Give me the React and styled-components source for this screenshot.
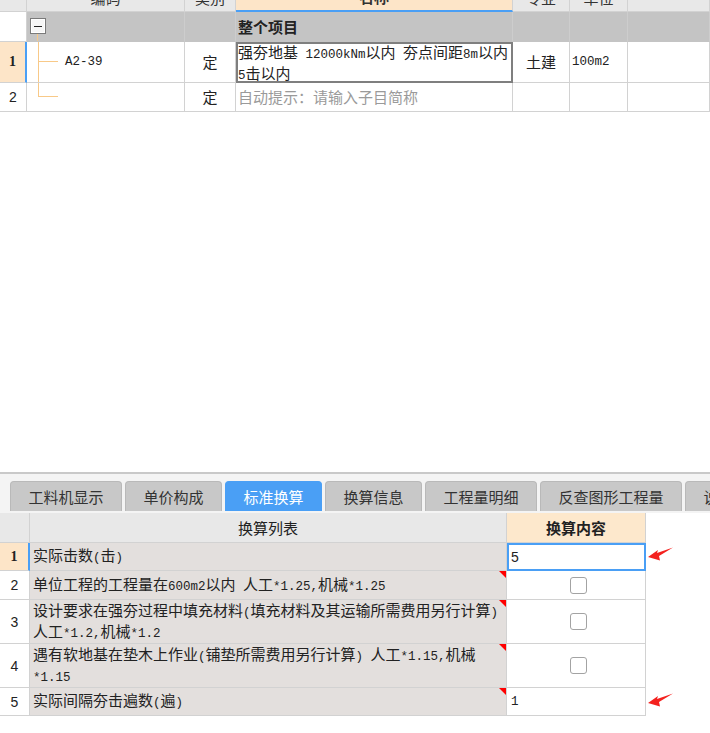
import React from "react";
import styled, { createGlobalStyle, css } from "styled-components";

const GlobalStyle = createGlobalStyle`
  html, body { margin: 0; padding: 0; background: #fff; }
  body { font-family: "Noto Sans CJK SC", "Noto Sans", sans-serif; color: #222; }
  * { box-sizing: border-box; }
`;

const LINE = "#d2d2d2";
const ORANGE = "#fde5c8";
const BLUE = "#4a9ff5";
const TREE = "#f8c988";

const Page = styled.div`
  width: 710px;
  height: 733px;
  display: flex;
  flex-direction: column;
  overflow: hidden;
  background: #fff;
`;

/* ---------- shared text helpers ---------- */
const Lat = styled.span`
  font-family: "Liberation Mono", monospace;
  font-size: 12.5px;
`;

function Mixed({ text }) {
  const parts = text.split(/([\x20-\x7e]+)/);
  return parts.map((p, i) =>
    /^[\x20-\x7e]+$/.test(p) ? <Lat key={i}>{p}</Lat> : <React.Fragment key={i}>{p}</React.Fragment>
  );
}

/* ---------- top grid ---------- */
const TopGrid = styled.div`
  display: grid;
  grid-template-columns: 27px 158px 51px 277px 57px 58px 1fr;
  grid-template-rows: 12px 30px 41px 29px;
`;

const Cell = styled.div`
  display: flex;
  align-items: center;
  justify-content: ${(p) => (p.$center ? "center" : "flex-start")};
  padding: 0 2px;
  border-right: 1px solid ${(p) => (p.$grey ? "#cdcdcd" : LINE)};
  border-bottom: 1px solid ${(p) => (p.$grey ? "#c4c4c4" : LINE)};
  background: ${(p) => (p.$grey ? "#c4c4c4" : "#fff")};
  font-size: 15px;
  line-height: 18px;
  white-space: pre;
  overflow: hidden;
  color: ${(p) => (p.$hint ? "#9a9a9a" : "#222")};
  font-weight: ${(p) => (p.$bold ? 700 : 400)};
  ${(p) =>
    p.$selected &&
    css`
      outline: 2px solid #7f7f7f;
      outline-offset: -2px;
      align-items: flex-start;
      padding-top: 1px;
    `}
`;

const HeadCell = styled.div`
  display: flex;
  align-items: flex-end;
  justify-content: center;
  padding-bottom: 4px;
  overflow: hidden;
  background: ${(p) => (p.$accent ? ORANGE : "#e8e8e8")};
  border-right: 1px solid ${LINE};
  border-bottom: ${(p) => (p.$accent ? `2px solid ${BLUE}` : `1px solid ${LINE}`)};
  font-size: 15px;
  line-height: 18px;
  color: #333;
  font-weight: ${(p) => (p.$accent ? 700 : 400)};
  white-space: nowrap;
`;

const NumCell = styled.div`
  display: flex;
  align-items: center;
  justify-content: center;
  background: ${(p) => (p.$active ? ORANGE : "#fff")};
  border-right: ${(p) => (p.$active ? `2px solid ${BLUE}` : `1px solid ${LINE}`)};
  border-bottom: 1px solid ${LINE};
  font-family: ${(p) => (p.$active ? '"Liberation Serif", serif' : '"Liberation Sans", sans-serif')};
  font-weight: ${(p) => (p.$active ? 700 : 400)};
  font-size: 14px;
  color: #222;
`;

const CodeCell = styled.div`
  display: flex;
  flex-direction: ${(p) => (p.$column ? "column" : "row")};
  align-items: stretch;
  padding: ${(p) => (p.$column ? "6px 0 0 3px" : "0")};
  border-right: 1px solid ${(p) => (p.$grey ? "#cdcdcd" : LINE)};
  border-bottom: 1px solid ${(p) => (p.$grey ? "#c4c4c4" : LINE)};
  background: ${(p) => (p.$grey ? "#c4c4c4" : "#fff")};
`;

const Collapse = styled.div`
  width: 16px;
  height: 16px;
  flex: none;
  border: 1px solid #7a7a7a;
  background: #f6f6f6;
  box-shadow: inset 0 0 0 1px #fff;
  display: flex;
  align-items: center;
  justify-content: center;
  &::before {
    content: "";
    width: 8px;
    height: 1px;
    background: #222;
  }
`;

const Stem = styled.div`
  flex: 1;
  margin-left: 7px;
  border-left: 1px solid ${TREE};
`;

const Connector = styled.div`
  flex: none;
  width: 20px;
  margin-left: 11px;
  border-left: ${(p) => (p.$last ? "none" : `1px solid ${TREE}`)};
`;

const Branch = styled.div`
  height: 50%;
  border-bottom: 1px solid ${TREE};
  border-left: ${(p) => (p.$last ? `1px solid ${TREE}` : "none")};
`;

const Code = styled.span`
  align-self: center;
  margin-left: 7px;
  font-family: "Liberation Mono", monospace;
  font-size: 12.5px;
  color: #222;
`;

/* ---------- bottom panel ---------- */
const Panel = styled.div`
  margin-top: auto;
  height: 261px;
  flex: none;
  display: flex;
  flex-direction: column;
  border-top: 2px solid #c9c9c9;
  background: #fff;
`;

const TabBar = styled.div`
  display: flex;
  gap: 3px;
  padding: 7px 0 2px 10px;
  background: #f4f4f4;
  overflow: hidden;
`;

const Tab = styled.div`
  flex: none;
  height: 30px;
  padding: 0 17.5px;
  border: 1px solid ${(p) => (p.$active ? BLUE : "#b9b9b9")};
  border-bottom: none;
  border-radius: 4px 4px 0 0;
  background: ${(p) => (p.$active ? BLUE : "#c8c8c8")};
  color: ${(p) => (p.$active ? "#fff" : "#333")};
  font-size: 15px;
  line-height: 29px;
  white-space: nowrap;
`;

const BGrid = styled.div`
  display: grid;
  grid-template-columns: 30px 477px 139px 1fr;
  grid-template-rows: 30px 28px 29px 44px 44px 28px;
`;

const BHead = styled.div`
  display: flex;
  align-items: center;
  justify-content: center;
  background: ${(p) => (p.$accent ? "#fde8cc" : "#e8e8e8")};
  border-right: 1px solid ${LINE};
  border-bottom: 1px solid ${LINE};
  font-size: 15px;
  font-weight: ${(p) => (p.$accent ? 700 : 400)};
  color: #222;
`;

const BText = styled.div`
  position: relative;
  display: flex;
  align-items: center;
  padding-left: 3px;
  background: #e3dfdd;
  border-right: 1px solid ${LINE};
  border-bottom: 1px solid ${LINE};
  font-size: 15px;
  line-height: 18px;
  white-space: pre;
  color: #222;
  ${(p) =>
    p.$flag &&
    css`
      &::after {
        content: "";
        position: absolute;
        top: 0;
        right: 0;
        border-style: solid;
        border-width: 0 7px 7px 0;
        border-color: transparent #f00 transparent transparent;
      }
    `}
`;

const BVal = styled.div`
  display: flex;
  align-items: center;
  justify-content: ${(p) => (p.$center ? "center" : "flex-start")};
  padding-left: 4px;
  background: #fff;
  border-right: 1px solid ${LINE};
  border-bottom: 1px solid ${LINE};
  font-family: "Liberation Sans", sans-serif;
  font-size: 14px;
  color: #222;
  ${(p) =>
    p.$selected &&
    css`
      outline: 2px solid ${BLUE};
      outline-offset: -2px;
    `}
`;

const Aside = styled.div`
  display: flex;
  align-items: center;
  padding: 0 0 0 2px;
  margin-top: ${(p) => p.$lift || 0}px;
`;

const Check = styled.span`
  width: 17px;
  height: 17px;
  border: 1px solid #a3a3a3;
  border-radius: 3px;
  background: #fff;
`;

const Arrow = () => (
  <svg width="26" height="14" viewBox="0 0 26 14">
    <polygon points="0,10 10,3 9,6 25,0.5 11,9 12,13.5" fill="#f4211e" />
  </svg>
);

const tabs = ["工料机显示", "单价构成", "标准换算", "换算信息", "工程量明细", "反查图形工程量", "说明信息"];

const rows = [
  { n: "1", text: "实际击数(击)", val: "5", kind: "input", selected: true, arrow: -6 },
  { n: "2", text: "单位工程的工程量在600m2以内 人工*1.25,机械*1.25", kind: "check", flag: true },
  { n: "3", text: "设计要求在强夯过程中填充材料(填充材料及其运输所需费用另行计算)\n人工*1.2,机械*1.2", kind: "check", flag: true },
  { n: "4", text: "遇有软地基在垫木上作业(铺垫所需费用另行计算) 人工*1.15,机械\n*1.15", kind: "check", flag: true },
  { n: "5", text: "实际间隔夯击遍数(遍)", val: "1", kind: "mono", flag: true, arrow: -4 },
];

export default function App() {
  return (
    <Page>
      <GlobalStyle />
      <TopGrid>
        <HeadCell />
        <HeadCell>编码</HeadCell>
        <HeadCell>类别</HeadCell>
        <HeadCell $accent>名称</HeadCell>
        <HeadCell>专业</HeadCell>
        <HeadCell>单位</HeadCell>
        <HeadCell />

        <NumCell />
        <CodeCell $grey $column>
          <Collapse />
          <Stem />
        </CodeCell>
        <Cell $grey />
        <Cell $grey $bold>整个项目</Cell>
        <Cell $grey />
        <Cell $grey />
        <Cell $grey />

        <NumCell $active>1</NumCell>
        <CodeCell>
          <Connector>
            <Branch />
          </Connector>
          <Code>A2-39</Code>
        </CodeCell>
        <Cell $center>定</Cell>
        <Cell $selected>
          <span>
            <Mixed text={"强夯地基 12000kNm以内 夯点间距8m以内\n5击以内"} />
          </span>
        </Cell>
        <Cell $center>土建</Cell>
        <Cell>
          <Lat>100m2</Lat>
        </Cell>
        <Cell />

        <NumCell>2</NumCell>
        <CodeCell>
          <Connector $last>
            <Branch $last />
          </Connector>
        </CodeCell>
        <Cell $center>定</Cell>
        <Cell $hint>自动提示：请输入子目简称</Cell>
        <Cell />
        <Cell />
        <Cell />
      </TopGrid>

      <Panel>
        <TabBar>
          {tabs.map((t) => (
            <Tab key={t} $active={t === "标准换算"}>
              {t}
            </Tab>
          ))}
        </TabBar>
        <BGrid>
          <BHead />
          <BHead>换算列表</BHead>
          <BHead $accent>换算内容</BHead>
          <Aside />
          {rows.map((r) => (
            <React.Fragment key={r.n}>
              <NumCell $active={r.selected}>{r.n}</NumCell>
              <BText $flag={r.flag}>
                <span>
                  <Mixed text={r.text} />
                </span>
              </BText>
              <BVal $center={r.kind === "check"} $selected={r.selected}>
                {r.kind === "check" && <Check />}
                {r.kind === "input" && r.val}
                {r.kind === "mono" && <Lat>{r.val}</Lat>}
              </BVal>
              <Aside $lift={r.arrow}>{r.arrow !== undefined && <Arrow />}</Aside>
            </React.Fragment>
          ))}
        </BGrid>
      </Panel>
    </Page>
  );
}
